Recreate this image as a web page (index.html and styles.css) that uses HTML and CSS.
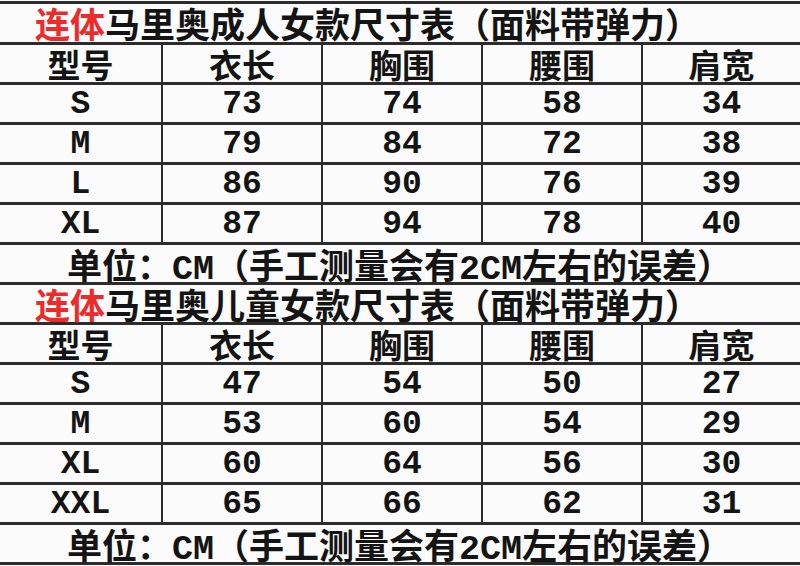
FILE: index.html
```html
<!DOCTYPE html>
<html lang="zh">
<head>
<meta charset="utf-8">
<title>尺寸表</title>
<link rel="stylesheet" href="styles.css">
</head>
<body>
<div class="sheet">
  <section class="chart">
    <div class="title first"><span class="red">连体</span>马里奥成人女款尺寸表（面料带弹力）</div>
    <div class="row head">
      <div class="cell">型号</div><div class="cell">衣长</div><div class="cell">胸围</div><div class="cell">腰围</div><div class="cell">肩宽</div>
    </div>
    <div class="row">
      <div class="cell lat">S</div><div class="cell num">73</div><div class="cell num">74</div><div class="cell num">58</div><div class="cell num">34</div>
    </div>
    <div class="row">
      <div class="cell lat">M</div><div class="cell num">79</div><div class="cell num">84</div><div class="cell num">72</div><div class="cell num">38</div>
    </div>
    <div class="row">
      <div class="cell lat">L</div><div class="cell num">86</div><div class="cell num">90</div><div class="cell num">76</div><div class="cell num">39</div>
    </div>
    <div class="row">
      <div class="cell lat">XL</div><div class="cell num">87</div><div class="cell num">94</div><div class="cell num">78</div><div class="cell num">40</div>
    </div>
    <div class="note">单位：<span class="lat">CM</span>（手工测量会有<span class="lat">2CM</span>左右的误差）</div>
  </section>
  <section class="chart">
    <div class="title"><span class="red">连体</span>马里奥儿童女款尺寸表（面料带弹力）</div>
    <div class="row head">
      <div class="cell">型号</div><div class="cell">衣长</div><div class="cell">胸围</div><div class="cell">腰围</div><div class="cell">肩宽</div>
    </div>
    <div class="row">
      <div class="cell lat">S</div><div class="cell num">47</div><div class="cell num">54</div><div class="cell num">50</div><div class="cell num">27</div>
    </div>
    <div class="row">
      <div class="cell lat">M</div><div class="cell num">53</div><div class="cell num">60</div><div class="cell num">54</div><div class="cell num">29</div>
    </div>
    <div class="row">
      <div class="cell lat">XL</div><div class="cell num">60</div><div class="cell num">64</div><div class="cell num">56</div><div class="cell num">30</div>
    </div>
    <div class="row">
      <div class="cell lat">XXL</div><div class="cell num">65</div><div class="cell num">66</div><div class="cell num">62</div><div class="cell num">31</div>
    </div>
    <div class="note last">单位：<span class="lat">CM</span>（手工测量会有<span class="lat">2CM</span>左右的误差）</div>
  </section>
</div>
</body>
</html>
```
FILE: styles.css
```css
html, body {
  margin: 0;
  padding: 0;
  background: #fbfbfb;
}

body {
  width: 800px;
  height: 566px;
  overflow: hidden;
  font-family: "Noto Sans CJK SC", "DejaVu Sans", sans-serif;
  color: #141414;
}

.sheet {
  padding-top: 1px;
}

.title,
.row,
.note {
  border-top: 3px solid #2c2c2c;
  height: 37px;
}

.title {
  padding-left: 35px;
  font-size: 35px;
  font-weight: 700;
  line-height: 37px;
  white-space: nowrap;
}

.title.first {
  height: 38px;
  line-height: 38px;
}

.red {
  color: #ee2b2b;
}

.row {
  display: grid;
  grid-template-columns: 161px 160px 160px 160px 1fr;
}

.cell {
  display: flex;
  align-items: center;
  justify-content: center;
  font-size: 33px;
  font-weight: 700;
  line-height: 34px;
  padding-top: 3px;
}

.cell + .cell {
  border-left: 2px solid #2c2c2c;
}

.head .cell {
  font-size: 33px;
  padding-top: 2px;
  line-height: 35px;
}

.num,
.lat {
  font-family: "Liberation Mono", "DejaVu Sans Mono", monospace;
  font-weight: 700;
}

.num {
  font-size: 33px;
}

.note {
  padding-left: 67px;
  font-size: 35px;
  font-weight: 700;
  line-height: 37px;
  white-space: nowrap;
}

.note .lat {
  font-size: 35px;
}

.note.last {
  border-bottom: 3px solid #2c2c2c;
}
```
